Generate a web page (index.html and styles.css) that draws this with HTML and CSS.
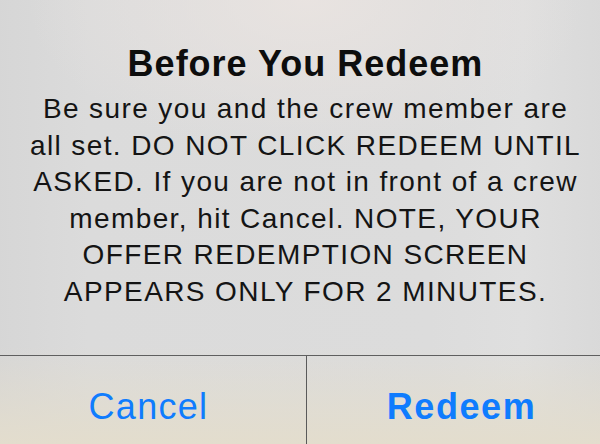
FILE: index.html
```html
<!DOCTYPE html>
<html lang="en">
<head>
<meta charset="utf-8">
<title>Before You Redeem</title>
<link rel="stylesheet" href="styles.css">
</head>
<body>
<div class="alert">
  <div class="alert-content">
    <h1 class="alert-title">Before You Redeem</h1>
    <p class="alert-message">Be sure you and the crew member are<br>all set. DO NOT CLICK REDEEM UNTIL<br>ASKED. If you are not in front of a crew<br>member, hit Cancel. NOTE, YOUR<br>OFFER REDEMPTION SCREEN<br>APPEARS ONLY FOR 2 MINUTES.</p>
  </div>
  <div class="alert-actions">
    <button class="alert-btn btn-cancel">Cancel</button>
    <button class="alert-btn btn-redeem">Redeem</button>
  </div>
</div>
</body>
</html>
```
FILE: styles.css
```css
html, body {
  margin: 0;
  padding: 0;
  width: 600px;
  height: 444px;
  overflow: hidden;
  background: #dbdbdb;
}
.alert {
  width: 621px;
  height: 444px;
  margin-left: -5px;
  display: flex;
  flex-direction: column;
  font-family: "Liberation Sans", Arial, sans-serif;
  background:
    radial-gradient(ellipse 45% 35% at 50% 0%, rgba(234,228,225,0.9) 0%, rgba(234,228,225,0) 100%),
    linear-gradient(to bottom, rgba(227,221,205,0) 78%, rgba(227,221,205,1) 100%),
    linear-gradient(to right, #d6d6d6 0%, #dbdbdb 15%, #dcdcdc 70%, #dfdfdf 85%, #d8d8d8 100%);
}
.alert-content {
  height: 356px;
  box-sizing: border-box;
  padding-top: 43px;
  border-bottom: 1px solid #5f5f5f;
  text-align: center;
}
.alert-title {
  margin: 0 0 6px;
  font-size: 36px;
  line-height: 42px;
  font-weight: bold;
  letter-spacing: 1px;
  color: #0d0d0d;
}
.alert-message {
  margin: 0;
  font-size: 28px;
  line-height: 36.5px;
  letter-spacing: 1.4px;
  color: #141414;
}
.alert-actions {
  flex: 1;
  display: flex;
}
.alert-btn {
  border: 0;
  margin: 0;
  background: transparent;
  font-family: inherit;
  font-size: 36px;
  line-height: 36px;
  color: #0f7cfe;
  padding: 14px 0 0;
  display: flex;
  align-items: center;
  justify-content: center;
}
.btn-cancel {
  width: 311px;
  padding-right: 4px;
  letter-spacing: 1.3px;
}
.btn-redeem {
  flex: 1;
  border-left: 1px solid #5a5a5a;
  font-weight: bold;
  letter-spacing: 1.6px;
}
```
